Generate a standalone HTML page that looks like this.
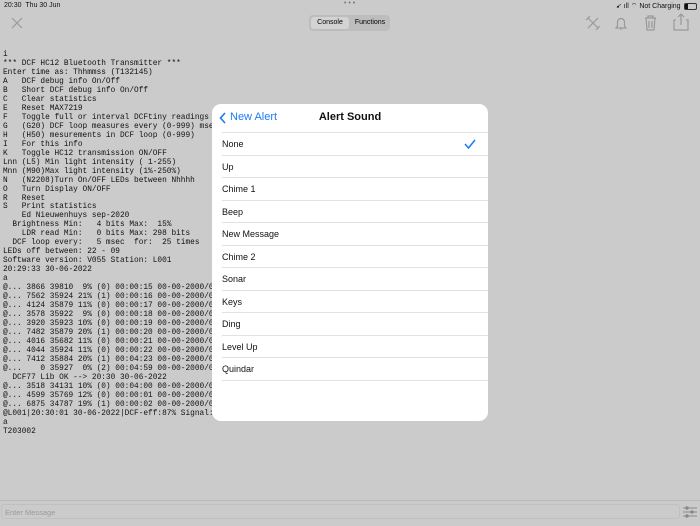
<!DOCTYPE html>
<html><head><style>
body{margin:0;width:700px;height:525px;background:#cbcbcb;position:relative;overflow:hidden;font-family:"Liberation Sans",sans-serif;}
.st{position:absolute;top:2px;font-size:7px;color:#111;}
pre{position:absolute;left:3px;top:51px;margin:0;font-family:"Liberation Mono",monospace;font-size:7.8px;line-height:8.97px;color:#111;}
.seg{position:absolute;left:309px;top:15px;width:81px;height:16px;background:#bdbdbd;border-radius:4px;font-size:7px;}
.seg .a{position:absolute;left:2px;top:2px;width:38px;height:12px;background:#d3d3d3;border-radius:3px;text-align:center;line-height:12px;}
.seg .b{position:absolute;left:42px;top:2px;width:38px;height:12px;text-align:center;line-height:12px;}
.modal{position:absolute;left:212px;top:104px;width:276px;height:317px;background:#fff;border-radius:9px;}
.hd{position:absolute;left:0;top:0;width:276px;height:28px;}
.row{position:absolute;left:10px;right:0;height:22.5px;border-top:1px solid #e2e2e2;font-size:9px;line-height:22px;color:#111;}
.bot{position:absolute;left:0;top:500px;width:700px;height:25px;border-top:1px solid #b8b8b8;}
.inp{position:absolute;left:1px;top:504px;width:679px;height:15px;border:1px solid #c0c0c0;border-radius:3px;font-size:7.5px;color:#999;line-height:15px;padding-left:3px;box-sizing:border-box;}
</style></head><body>
<div class="st" style="left:4px">20:30&nbsp;&nbsp;Thu 30 Jun</div>
<div class="st" style="left:344px;top:0;color:#777">• • •</div>
<div class="st" style="left:616px">➹ ıll ⌔ Not Charging</div>
<div style="position:absolute;left:684px;top:3px;width:11px;height:5px;border:1px solid #333;border-radius:2px"><div style="width:3px;height:5px;background:#111"></div></div>
<svg style="position:absolute;left:0;top:0" width="700" height="40" fill="none" stroke="#999" stroke-width="1.2">
<path d="M12 18l10 10M22 18l-10 10"/>
<path d="M588 18l10 10M598 18l-10 10M586 20l4-4M596 30l4-4"/>
<path d="M621 30v-2h0M616 28h10l-1.5-2v-4a3.5 3.5 0 0 0-7 0v4z"/>
<path d="M645 18h11M648 18v-2h5v2M646 18l1 12h7l1-12M649 21v7M652 21v7"/>
<path d="M676 20h-2v10h14v-10h-2M681 25v-11M678 17l3-3 3 3"/>
</svg>
<div class="seg"><div class="a">Console</div><div class="b">Functions</div></div>
<pre>i
*** DCF HC12 Bluetooth Transmitter ***
Enter time as: Thhmmss (T132145)
A   DCF debug info On/Off
B   Short DCF debug info On/Off
C   Clear statistics
E   Reset MAX7219
F   Toggle full or interval DCFtiny readings
G   (G20) DCF loop measures every (0-999) msec
H   (H50) mesurements in DCF loop (0-999)
I   For this info
K   Toggle HC12 transmission ON/OFF
Lnn (L5) Min light intensity ( 1-255)
Mnn (M90)Max light intensity (1%-250%)
N   (N2208)Turn On/OFF LEDs between Nhhhh
O   Turn Display ON/OFF
R   Reset
S   Print statistics
    Ed Nieuwenhuys sep-2020
  Brightness Min:   4 bits Max:  15%
    LDR read Min:   0 bits Max: 298 bits
  DCF loop every:   5 msec  for:  25 times
LEDs off between: 22 - 09
Software version: V055 Station: L001
20:29:33 30-06-2022
a
@... 3866 39810  9% (0) 00:00:15 00-00-2000/0
@... 7562 35924 21% (1) 00:00:16 00-00-2000/0
@... 4124 35879 11% (0) 00:00:17 00-00-2000/0
@... 3578 35922  9% (0) 00:00:18 00-00-2000/0
@... 3920 35923 10% (0) 00:00:19 00-00-2000/0
@... 7482 35879 20% (1) 00:00:20 00-00-2000/0
@... 4016 35682 11% (0) 00:00:21 00-00-2000/0
@... 4044 35924 11% (0) 00:00:22 00-00-2000/0
@... 7412 35884 20% (1) 00:04:23 00-00-2000/0
@...    0 35927  0% (2) 00:04:59 00-00-2000/0
  DCF77 Lib OK --> 20:30 30-06-2022
@... 3518 34131 10% (0) 00:04:00 00-00-2000/0
@... 4599 35769 12% (0) 00:00:01 00-00-2000/0
@... 6875 34787 19% (1) 00:00:02 00-00-2000/0
@L001|20:30:01 30-06-2022|DCF-eff:87% Signal:
a
T203002</pre>
<div class="modal">
<div class="hd">
<svg style="position:absolute;left:7px;top:8px" width="8" height="12" fill="none" stroke="#1a7cf5" stroke-width="1.6"><path d="M6 1L1.5 6L6 11"/></svg>
<div style="position:absolute;left:18px;top:7px;font-size:11px;color:#1a7cf5">New Alert</div>
<div style="position:absolute;left:0;width:276px;top:7px;text-align:center;font-size:11px;font-weight:bold;color:#111">Alert Sound</div>
</div>
<div class="row" style="top:28px">None<svg style="position:absolute;right:12px;top:6px" width="12" height="10" fill="none" stroke="#1a7cf5" stroke-width="1.5"><path d="M1 5l3.5 4L11 1"/></svg></div>
<div class="row" style="top:50.5px">Up</div>
<div class="row" style="top:73px">Chime 1</div>
<div class="row" style="top:95.5px">Beep</div>
<div class="row" style="top:118px">New Message</div>
<div class="row" style="top:140.5px">Chime 2</div>
<div class="row" style="top:163px">Sonar</div>
<div class="row" style="top:185.5px">Keys</div>
<div class="row" style="top:208px">Ding</div>
<div class="row" style="top:230.5px">Level Up</div>
<div class="row" style="top:253px">Quindar</div>
<div class="row" style="top:275.5px"></div>
</div>
<div class="bot"></div>
<div class="inp">Enter Message</div>
<svg style="position:absolute;left:682px;top:506px" width="16" height="14" stroke="#888" stroke-width="1" fill="#888"><path d="M1 2h14M1 6h14M1 10h14"/><circle cx="5" cy="2" r="1.2"/><circle cx="10" cy="6" r="1.2"/><circle cx="5" cy="10" r="1.2"/></svg>
</body></html>
